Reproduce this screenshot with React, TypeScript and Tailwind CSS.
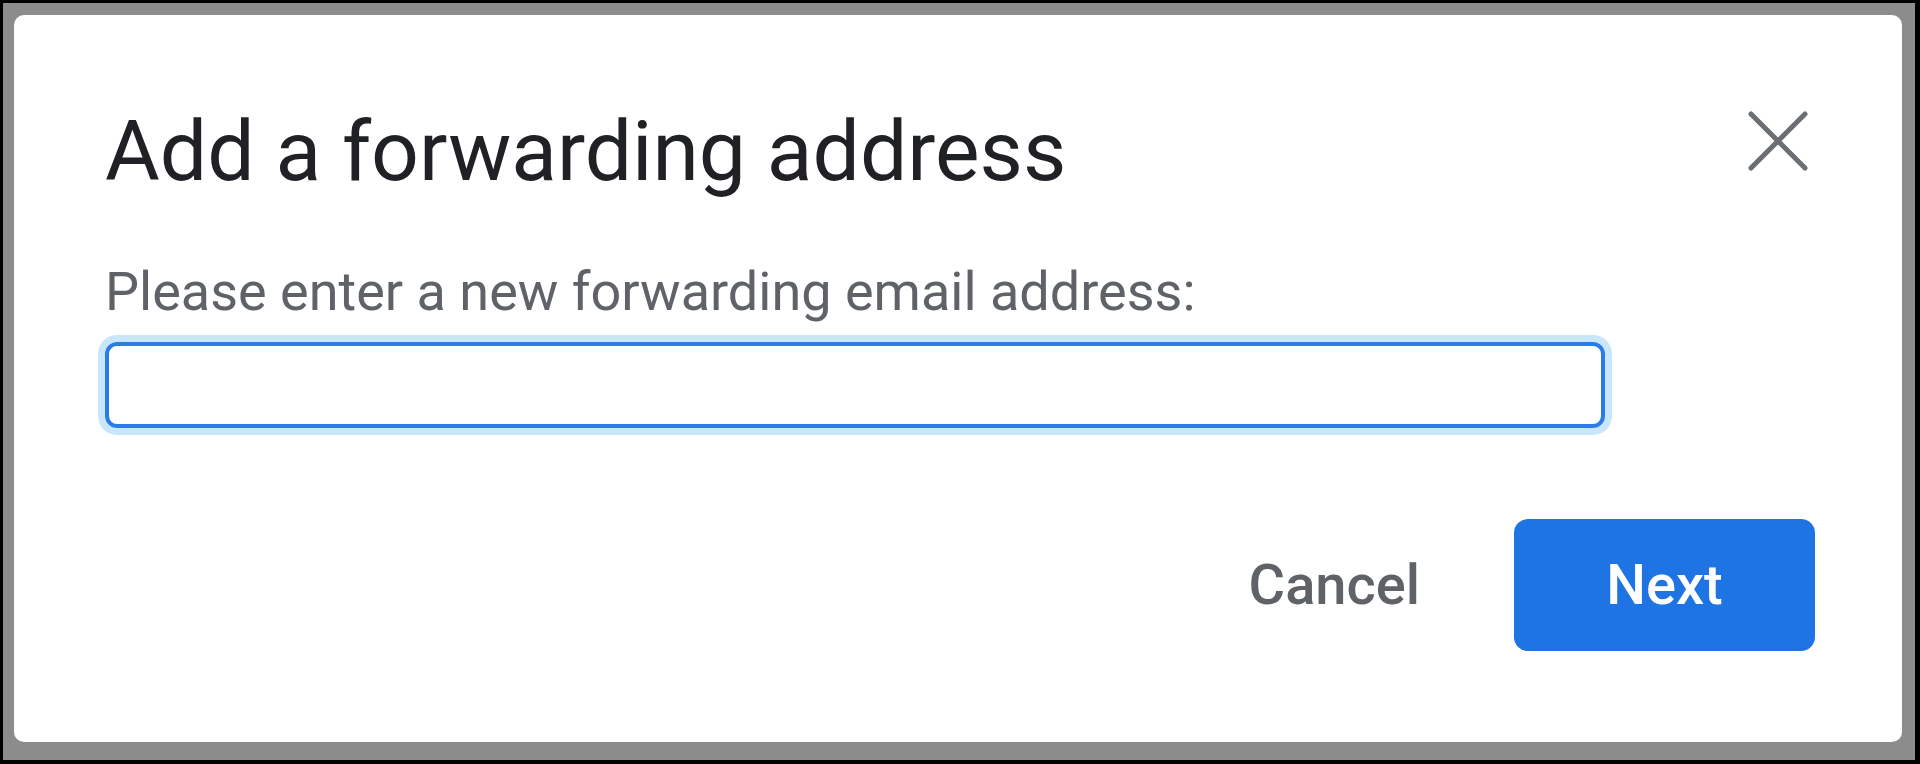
import { useState } from 'react';

const CloseIcon = () => (
  <svg width="62" height="62" viewBox="0 0 62 62" fill="none" stroke="#6b6e72" strokeWidth="5" strokeLinecap="round">
    <path d="M4 4 L58 58" />
    <path d="M58 4 L4 58" />
  </svg>
);

export default function App() {
  const [email, setEmail] = useState('');

  return (
    <div className="w-[1920px] h-[764px] bg-black p-[3px_5px_4px_3px]">
      <div className="w-full h-full bg-[#8c8c8c] pt-[12px] pl-[11px] pr-[13px] pb-[18px]">
        <div className="h-full bg-white rounded-[10px] pt-[95px] pl-[91px] pr-[87px] pb-[91px] flex flex-col font-['Roboto',sans-serif]">
          <div className="flex items-start justify-between">
            <h1 className="text-[84px] leading-none text-[#202124] font-normal">Add a forwarding address</h1>
            <button className="mr-[6px]" aria-label="Close">
              <CloseIcon />
            </button>
          </div>

          <p className="mt-[71px] text-[54px] leading-none text-[#5f6368]">
            Please enter a new forwarding email address:
          </p>

          <input
            type="email"
            value={email}
            onChange={(e) => setEmail(e.target.value)}
            className="mt-[23px] w-[1500px] h-[86px] border-[4px] border-[#2a7de9] rounded-[12px] shadow-[0_0_0_7px_#c8e6fc] outline-none px-4 text-[48px] text-[#202124]"
          />

          <div className="mt-auto flex items-center justify-end gap-[94px]">
            <button className="text-[56px] leading-none font-medium text-[#5f6368]">Cancel</button>
            <button className="w-[301px] h-[132px] rounded-[14px] bg-[#1f74e3] text-white text-[56px] leading-none font-medium">
              Next
            </button>
          </div>
        </div>
      </div>
    </div>
  );
}
